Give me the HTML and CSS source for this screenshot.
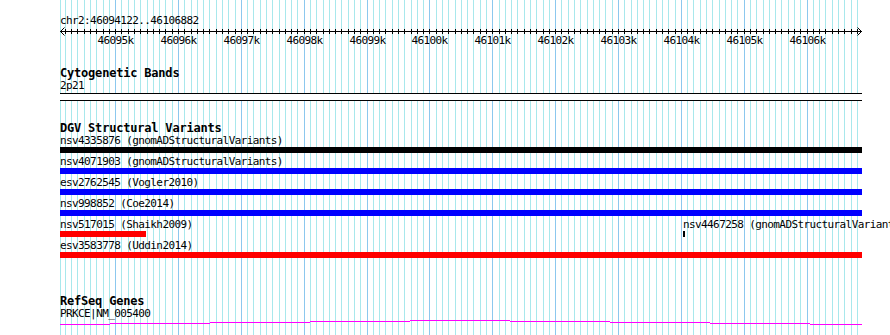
FILE: index.html
```html
<!DOCTYPE html>
<html lang="en">
<head>
    <meta charset="UTF-8">
    <title>chr2:46094122..46106882</title>
    <link rel="stylesheet" href="styles.css">
</head>
<body>

<div class="vista">
    <!-- Rejilla vertical de fondo -->
    <svg id="rejilla" class="rejilla" width="890" height="335"></svg>

    <div class="pistas">
        <div class="posicion">chr2:46094122..46106882</div>
        <svg id="regla" class="regla" width="802" height="20"></svg>

        <!-- Bandas citogeneticas -->
        <div class="pista pista-bandas">
            <div class="titulo">Cytogenetic Bands</div>
            <div class="etiqueta">2p21</div>
            <div class="banda"></div>
        </div>

        <!-- Variantes estructurales -->
        <div class="pista pista-dgv">
            <div class="titulo">DGV Structural Variants</div>
            <div class="fila">
                <div class="rasgo" style="width:802px">
                    <div class="etiqueta">nsv4335876 (gnomADStructuralVariants)</div>
                    <div class="barra negra"></div>
                </div>
            </div>
            <div class="fila">
                <div class="rasgo" style="width:802px">
                    <div class="etiqueta">nsv4071903 (gnomADStructuralVariants)</div>
                    <div class="barra azul"></div>
                </div>
            </div>
            <div class="fila">
                <div class="rasgo" style="width:802px">
                    <div class="etiqueta">esv2762545 (Vogler2010)</div>
                    <div class="barra azul"></div>
                </div>
            </div>
            <div class="fila">
                <div class="rasgo" style="width:802px">
                    <div class="etiqueta">nsv998852 (Coe2014)</div>
                    <div class="barra azul"></div>
                </div>
            </div>
            <div class="fila">
                <div class="rasgo" style="width:86px">
                    <div class="etiqueta">nsv517015 (Shaikh2009)</div>
                    <div class="barra roja"></div>
                </div>
                <div class="rasgo" style="margin-left:537px;width:2px">
                    <div class="etiqueta">nsv4467258 (gnomADStructuralVariants)</div>
                    <div class="barra negra"></div>
                </div>
            </div>
            <div class="fila">
                <div class="rasgo" style="width:802px">
                    <div class="etiqueta">esv3583778 (Uddin2014)</div>
                    <div class="barra roja"></div>
                </div>
            </div>
        </div>

        <!-- Genes RefSeq -->
        <div class="pista pista-genes">
            <div class="titulo">RefSeq Genes</div>
            <div class="etiqueta">PRKCE|NM_005400</div>
            <svg class="gen" width="802" height="6">
                <rect x="0" y="4" width="50" height="1"></rect>
                <rect x="50" y="3" width="100" height="1"></rect>
                <rect x="150" y="2" width="100" height="1"></rect>
                <rect x="250" y="1" width="100" height="1"></rect>
                <rect x="350" y="0" width="100" height="1"></rect>
                <rect x="450" y="1" width="100" height="1"></rect>
                <rect x="550" y="2" width="100" height="1"></rect>
                <rect x="650" y="3" width="100" height="1"></rect>
                <rect x="750" y="4" width="52" height="1"></rect>
            </svg>
        </div>
    </div>
</div>

<script>
    // Region visible
    var inicio = 46094122;
    var fin = 46106882;
    var izquierda = 60;
    var ancho = 802;
    var ns = "http://www.w3.org/2000/svg";

    function aPixel(bp) {
        return Math.round(izquierda + (bp - inicio) * ancho / (fin - inicio));
    }

    function linea(svg, x1, y1, x2, y2, clase) {
        var l = document.createElementNS(ns, "line");
        l.setAttribute("x1", x1);
        l.setAttribute("y1", y1);
        l.setAttribute("x2", x2);
        l.setAttribute("y2", y2);
        l.setAttribute("class", clase);
        svg.appendChild(l);
    }

    var rejilla = document.getElementById("rejilla");
    var regla = document.getElementById("regla");

    // Linea del borde izquierdo
    linea(rejilla, izquierda + 0.5, 0, izquierda + 0.5, 335, "menor");

    // Regla horizontal y flechas
    linea(regla, 0, 4.5, ancho, 4.5, "trazo");
    linea(regla, 0.5, 4.5, 4.5, 0.5, "trazo");
    linea(regla, 0.5, 4.5, 4.5, 8.5, "trazo");
    linea(regla, ancho - 0.5, 4.5, ancho - 4.5, 0.5, "trazo");
    linea(regla, ancho - 0.5, 4.5, ancho - 4.5, 8.5, "trazo");

    for (var bp = Math.ceil(inicio / 100) * 100; bp <= fin; bp += 100) {
        var x = aPixel(bp);
        var mayor = bp % 1000 === 0;
        linea(rejilla, x + 0.5, 0, x + 0.5, 335, mayor ? "mayor" : "menor");
        linea(regla, x - izquierda + 0.5, 2, x - izquierda + 0.5, 7, "trazo");
        if (mayor) {
            var t = document.createElementNS(ns, "text");
            t.setAttribute("x", x - izquierda + 0.5);
            t.setAttribute("y", 17);
            t.setAttribute("text-anchor", "middle");
            t.textContent = (bp / 1000) + "k";
            regla.appendChild(t);
        }
    }
</script>

</body>
</html>
```

FILE: styles.css
```css
body {
    margin: 0;
    background-color: #fff;
    color: #000;
    font-family: "DejaVu Sans Mono", monospace;
}

.vista {
    position: relative;
    width: 890px;
    height: 335px;
    overflow: hidden;
}

/* Rejilla de fondo */
.rejilla {
    position: absolute;
    top: 0;
    left: 0;
    shape-rendering: crispEdges;
}

.rejilla .menor {
    stroke: #a8e8ec;
    stroke-width: 1;
}

.rejilla .mayor {
    stroke: #8cc8ee;
    stroke-width: 1;
}

.pistas {
    position: relative;
    width: 802px;
    padding: 15px 0 0 60px;
}

.posicion, .etiqueta {
    font-size: 11px;
    letter-spacing: -0.6px;
    line-height: 12px;
    white-space: nowrap;
}

/* Regla */
.regla {
    display: block;
    overflow: visible;
}

.regla .trazo {
    stroke: #000;
    stroke-width: 1;
}

.regla text {
    font-family: "DejaVu Sans Mono", monospace;
    font-size: 11px;
    letter-spacing: -0.6px;
    fill: #000;
}

/* Pistas */
.pista {
    margin-top: 20px;
}

.titulo {
    font-size: 12px;
    font-weight: bold;
    letter-spacing: -0.2px;
    line-height: 14px;
    white-space: nowrap;
}

.pista-bandas .titulo {
    line-height: 13px;
}

.banda {
    margin-top: 1px;
    height: 8px;
    box-sizing: border-box;
    background-color: #fff;
    border-top: 1px solid #000;
    border-bottom: 1px solid #000;
}

.fila {
    display: flex;
    margin-bottom: 3px;
}

.fila:last-child {
    margin-bottom: 0;
}

.rasgo {
    flex: none;
}

.barra {
    height: 6px;
}

.negra {
    background-color: #000;
}

.azul {
    background-color: #00f;
}

.roja {
    background-color: #f00;
}

.pista-genes {
    margin-top: 36px;
}

.gen {
    display: block;
    fill: #f0f;
}
```
